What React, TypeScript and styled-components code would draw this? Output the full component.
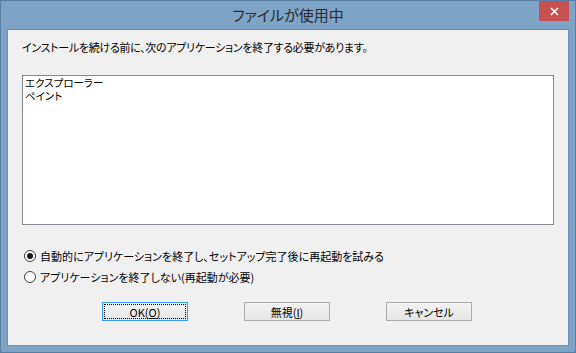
import React from "react";
import styled, { createGlobalStyle } from "styled-components";

const Global = createGlobalStyle`
  html, body { margin: 0; padding: 0; background: #7da3c6; }
  body { font-family: "Noto Sans CJK JP", "Noto Sans", sans-serif; }
  * { box-sizing: border-box; }
`;

const Window = styled.div`
  width: 576px;
  height: 353px;
  border: 1px solid #5b7fa3;
  background: #7da3c6;
  display: flex;
  flex-direction: column;
`;

const TitleBar = styled.div`
  height: 28px;
  display: grid;
  grid-template-columns: 1fr auto 1fr;
  align-items: start;
`;

const Title = styled.div`
  grid-column: 2;
  font-size: 15px;
  line-height: 28px;
  color: #2b2b2b;
  font-feature-settings: "palt";
`;

const CloseButton = styled.div`
  grid-column: 3;
  justify-self: end;
  margin-right: 6px;
  width: 30px;
  height: 20px;
  background: #c75050;
  display: flex;
  align-items: center;
  justify-content: center;
`;

const Client = styled.div`
  margin: 0 6px 6px 6px;
  flex: 1;
  border: 1px solid #6a8fb3;
  background: #f0f0f0;
  padding: 9px 14px 0 14px;
  display: flex;
  flex-direction: column;
  font-size: 11px;
  color: #000;
  font-feature-settings: "palt";
`;

const Message = styled.div`
  line-height: 16px;
  height: 16px;
  white-space: nowrap;
  letter-spacing: -0.3px;
`;

const ListBox = styled.div`
  margin-top: 20px;
  height: 150px;
  border: 1px solid #828790;
  background: #fff;
  padding: 0 2px;
  font-size: 10.5px;
  line-height: 13px;
`;

const ListItem = styled.div`
  white-space: nowrap;
`;

const Options = styled.div`
  margin-top: 23px;
  display: flex;
  flex-direction: column;
  gap: 5px;
`;

const OptionRow = styled.label`
  display: flex;
  align-items: center;
  gap: 4px;
  height: 16px;
  margin-left: 2px;
  white-space: nowrap;
`;

const Radio = styled.span<{ $checked?: boolean }>`
  flex: none;
  width: 12px;
  height: 12px;
  border-radius: 50%;
  border: 1px solid #3c3c3c;
  background: #fff;
  display: flex;
  align-items: center;
  justify-content: center;
  &::after {
    content: "";
    display: ${(p) => (p.$checked ? "block" : "none")};
    width: 6px;
    height: 6px;
    border-radius: 50%;
    background: #1a1a1a;
  }
`;

const ButtonRow = styled.div`
  margin-top: 17px;
  display: flex;
  gap: 56px;
  padding-left: 80px;
`;

const Button = styled.div<{ $default?: boolean }>`
  width: 86px;
  height: 19px;
  border: 1px solid ${(p) => (p.$default ? "#3399ff" : "#acacac")};
  background: linear-gradient(#f2f2f2, #e6e6e6);
  display: flex;
  align-items: center;
  justify-content: center;
  font-size: 11px;
  position: relative;
`;

const Focus = styled.span`
  position: absolute;
  inset: 1px;
  border: 1px dotted #000;
`;

const U = styled.span`
  text-decoration: underline;
`;

export default function App() {
  return (
    <>
      <Global />
      <Window>
        <TitleBar>
          <Title>ファイルが使用中</Title>
          <CloseButton>
            <svg width="9" height="9" viewBox="0 0 9 9">
              <path d="M1 1L8 8M8 1L1 8" stroke="#fff" strokeWidth="1.6" />
            </svg>
          </CloseButton>
        </TitleBar>
        <Client>
          <Message>インストールを続ける前に、次のアプリケーションを終了する必要があります。</Message>
          <ListBox>
            <ListItem>エクスプローラー</ListItem>
            <ListItem>ペイント</ListItem>
          </ListBox>
          <Options>
            <OptionRow>
              <Radio $checked />
              自動的にアプリケーションを終了し、セットアップ完了後に再起動を試みる
            </OptionRow>
            <OptionRow>
              <Radio />
              アプリケーションを終了しない(再起動が必要)
            </OptionRow>
          </Options>
          <ButtonRow>
            <Button $default>
              <Focus />
              OK(<U>O</U>)
            </Button>
            <Button>
              無視(<U>I</U>)
            </Button>
            <Button>キャンセル</Button>
          </ButtonRow>
        </Client>
      </Window>
    </>
  );
}
